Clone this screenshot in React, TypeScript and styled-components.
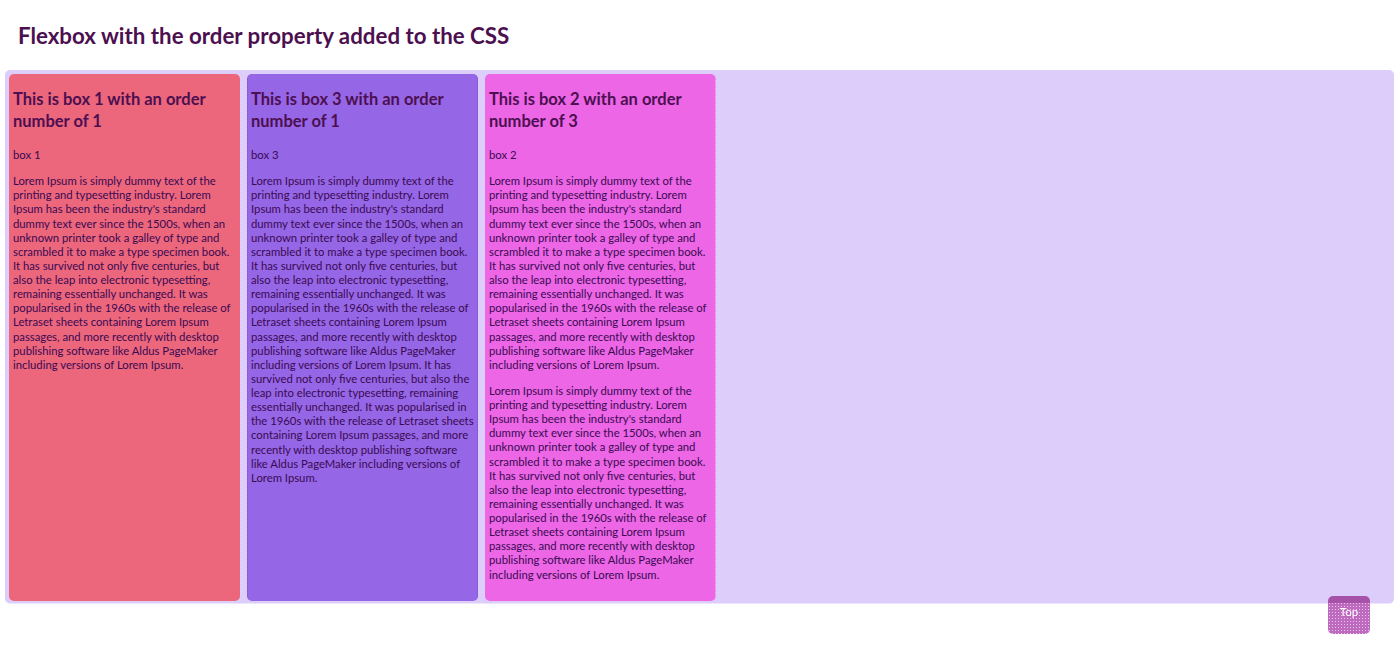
import styled, { createGlobalStyle } from 'styled-components';

const GlobalStyle = createGlobalStyle`
  html, body {
    margin: 0;
    padding: 0;
    background: #fff;
  }
  body {
    font-family: Lato, "Noto Sans", sans-serif;
    color: #4c0f50;
  }
`;

const Page = styled.div`
  padding: 0 6px 0 5px;
  height: 664px;
  box-sizing: border-box;
  overflow: hidden;
`;

const Title = styled.h1`
  margin: 0;
  padding: 22px 0 0 13px;
  height: 70px;
  box-sizing: border-box;
  font-size: 22.3px;
  line-height: 28px;
  font-weight: 700;
`;

const Container = styled.div`
  display: flex;
  gap: 7px;
  align-items: stretch;
  padding: 4px 4px 2px;
  background: #dccdfa;
  border-bottom: 1px dotted #fff;
  border-radius: 5px;
`;

const Box = styled.div<{ $color: string; $order: number; $left: string; $right: string }>`
  order: ${(p) => p.$order};
  width: 231px;
  box-sizing: border-box;
  padding: 14px 3px 19px;
  background: ${(p) => p.$color};
  border-left: 1px dotted ${(p) => p.$left};
  border-right: 1px dotted ${(p) => p.$right};
  border-radius: 5px;
`;

const BoxTitle = styled.h2`
  margin: 0 0 16px;
  font-size: 16.5px;
  line-height: 22px;
  font-weight: 700;
`;

const Text = styled.p`
  margin: 0 0 12px;
  font-size: 11.3px;
  line-height: 14.13px;
  color: #3a0a52;

  &:last-child {
    margin-bottom: 0;
  }
`;

const TopButton = styled.a`
  position: fixed;
  right: 30px;
  bottom: 30px;
  width: 42px;
  height: 38px;
  box-sizing: border-box;
  padding-top: 9px;
  text-align: center;
  font-size: 11.5px;
  line-height: 14px;
  color: #fff;
  border-radius: 5px;
  background-color: #bd6abf;
  background-image: linear-gradient(#a652a8 7px, transparent 7px),
    radial-gradient(#e6c6ea 0.8px, transparent 1px);
  background-size: 100% 100%, 3px 3px;
`;

const LOREM =
  "Lorem Ipsum is simply dummy text of the printing and typesetting industry. Lorem Ipsum has been the industry's standard dummy text ever since the 1500s, when an unknown printer took a galley of type and scrambled it to make a type specimen book. It has survived not only five centuries, but also the leap into electronic typesetting, remaining essentially unchanged. It was popularised in the 1960s with the release of Letraset sheets containing Lorem Ipsum passages, and more recently with desktop publishing software like Aldus PageMaker including versions of Lorem Ipsum.";

const EXTRA =
  'It has survived not only five centuries, but also the leap into electronic typesetting, remaining essentially unchanged. It was popularised in the 1960s with the release of Letraset sheets containing Lorem Ipsum passages, and more recently with desktop publishing software like Aldus PageMaker including versions of Lorem Ipsum.';

const boxes = [
  { id: 1, order: 1, color: '#ec667c', left: '#ec667c', right: '#ec667c', paragraphs: [LOREM] },
  { id: 2, order: 3, color: '#ec66e6', left: '#ec66e6', right: '#f6c8f4', paragraphs: [LOREM, LOREM] },
  { id: 3, order: 1, color: '#9566e6', left: '#7d4fcc', right: '#7d4fcc', paragraphs: [`${LOREM} ${EXTRA}`] },
];

export default function App() {
  return (
    <Page>
      <GlobalStyle />
      <Title>Flexbox with the order property added to the CSS</Title>
      <Container>
        {boxes.map((box) => (
          <Box key={box.id} $color={box.color} $order={box.order} $left={box.left} $right={box.right}>
            <BoxTitle>
              This is box {box.id} with an order number of {box.order}
            </BoxTitle>
            <Text>box {box.id}</Text>
            {box.paragraphs.map((text, i) => (
              <Text key={i}>{text}</Text>
            ))}
          </Box>
        ))}
      </Container>
      <TopButton>Top</TopButton>
    </Page>
  );
}
